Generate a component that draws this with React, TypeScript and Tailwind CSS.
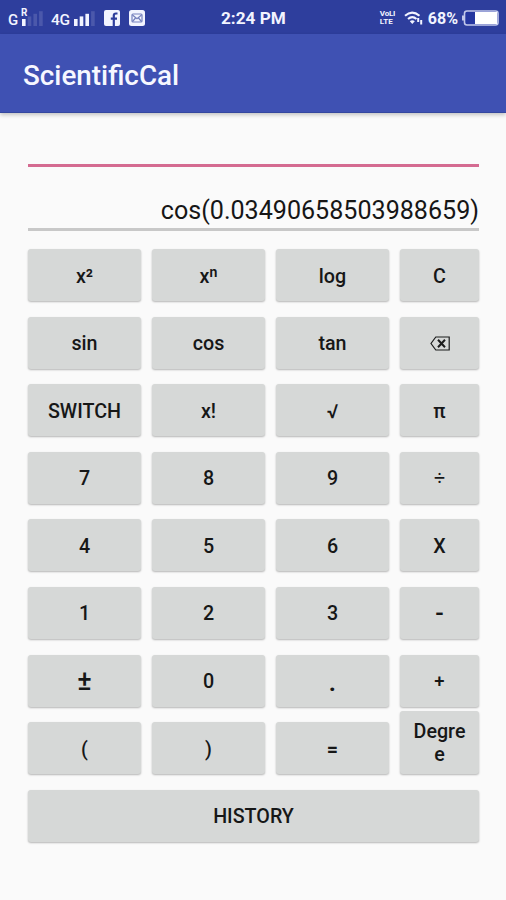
import React from 'react';

interface CalcKey {
  label: React.ReactNode;
  id: string;
  className?: string;
}

const BackspaceIcon = () => (
  <svg width="20" height="15" viewBox="0 0 20 15" fill="none" stroke="#1b1c1c">
    <path d="M5.8 1H19.2V14H5.8L1 7.5Z" strokeWidth="1.2" />
    <path d="M8 3.8L15 11.2M15 3.8L8 11.2" strokeWidth="2" />
  </svg>
);

const keys: CalcKey[] = [
  { id: 'square', label: 'x²' },
  { id: 'power', label: 'xⁿ' },
  { id: 'log', label: 'log' },
  { id: 'clear', label: 'C' },
  { id: 'sin', label: 'sin' },
  { id: 'cos', label: 'cos' },
  { id: 'tan', label: 'tan' },
  { id: 'backspace', label: <BackspaceIcon /> },
  { id: 'switch', label: 'SWITCH' },
  { id: 'factorial', label: 'x!' },
  { id: 'sqrt', label: '√' },
  { id: 'pi', label: 'π' },
  { id: '7', label: '7' },
  { id: '8', label: '8' },
  { id: '9', label: '9' },
  { id: 'divide', label: '÷', className: 'font-normal' },
  { id: '4', label: '4' },
  { id: '5', label: '5' },
  { id: '6', label: '6' },
  { id: 'multiply', label: 'X' },
  { id: '1', label: '1' },
  { id: '2', label: '2' },
  { id: '3', label: '3' },
  { id: 'minus', label: '-', className: 'text-[25px]' },
  { id: 'sign', label: '±', className: 'text-[27px]' },
  { id: '0', label: '0' },
  { id: 'dot', label: '.', className: 'text-[28px]' },
  { id: 'plus', label: '+', className: 'text-[18.5px]' },
  { id: 'open', label: '(' },
  { id: 'close', label: ')' },
  { id: 'equals', label: '=', className: 'font-bold' },
  { id: 'degree', label: 'Degree', className: '-mt-[11px] px-3 pb-[2px] break-all' },
  { id: 'history', label: 'HISTORY', className: 'col-span-4' },
];

const SignalBars = ({ level }: { level: number }) => (
  <svg width="21" height="16" viewBox="0 0 21 16" fill="#f2f4ff">
    {[0, 1, 2, 3].map((i) => (
      <rect
        key={i}
        x={i * 5.7}
        y={9 - i * 2.6}
        width="3.6"
        height={7 + i * 2.6}
        opacity={i < level ? 1 : 0.15}
      />
    ))}
  </svg>
);

const StatusBar = () => (
  <header className="flex h-[34px] items-center bg-[#2e3e9d] pt-0.5 text-[#f2f4ff]">
    <div className="flex w-[221px] items-center pl-2">
      <span className="w-[10px] pt-[3px] text-[15px] leading-[16px] font-medium">G</span>
      <div className="relative ml-1">
        <SignalBars level={1} />
        <span className="absolute -top-[2px] -left-px h-[10px] bg-[#2e3e9d] text-[10px] leading-[10px] font-bold">R</span>
      </div>
      <span className="ml-[8px] w-[19px] pt-[3px] text-[15.5px] leading-[16px] font-medium tracking-tight">4G</span>
      <div className="ml-[4px] flex">
        <SignalBars level={3} />
      </div>
      <svg className="ml-[9px]" width="16" height="16" viewBox="0 0 16 16">
        <rect width="16" height="16" rx="2" fill="#f2f4ff" />
        <path d="M13.5 3.5H12Q9.8 3.5 9.8 5.6V16M6.8 8.6H13" fill="none" stroke="#2e3e9d" strokeWidth="2.2" />
      </svg>
      <svg className="ml-[9px]" width="16" height="16" viewBox="0 0 16 16" fill="none">
        <rect width="16" height="16" rx="2.5" fill="#f2f4ff" />
        <rect x="3" y="4" width="10" height="8" rx="1" stroke="#7480bd" strokeWidth="1.2" />
        <path d="M3.5 5L8 8.7L12.5 5M3.5 11.5L6.5 8M12.5 11.5L9.5 8" stroke="#7480bd" strokeWidth="1.2" />
      </svg>
    </div>
    <span className="pt-px text-[17.2px] font-bold">2:24 PM</span>
    <div className="ml-auto flex items-center pr-[7px]">
      <div className="flex w-[17px] flex-col text-[8px] leading-[8px] font-bold">
        <span className="tracking-tight">VoLI</span>
        <span>LTE</span>
      </div>
      <svg className="ml-[7px]" width="19" height="14" viewBox="0 0 19 14" fill="none" stroke="#f2f4ff">
        <path d="M1 4.8Q8 -1.6 15.5 4.8" strokeWidth="2" />
        <path d="M4 8Q8.3 4.2 12.5 8" strokeWidth="2" />
        <path d="M5.8 10.2Q8.3 8.3 10.8 10.2L8.3 13Z" fill="#f2f4ff" stroke="none" />
        <path d="M14.2 7V11M17.2 9V13.5" strokeWidth="2" />
      </svg>
      <span className="ml-[5px] pt-px text-[16px] font-bold">68%</span>
      <svg className="ml-[3px]" width="38" height="16" viewBox="0 0 38 16">
        <path d="M1 5.5H3V10.5H1Z" fill="#c2c8ea" />
        <rect x="3.5" y="1" width="33.5" height="14" rx="2.5" fill="#2536a0" stroke="#c2c8ea" strokeWidth="1.6" />
        <rect x="14" y="2" width="22" height="12" fill="#ffffff" />
      </svg>
    </div>
  </header>
);

const KeyButton = ({ label, className = '' }: { label: React.ReactNode; className?: string }) => (
  <button
    className={`flex items-center justify-center rounded-[3px] bg-[#d6d8d7] pt-[2px] text-center leading-[23px] text-[#161717] shadow-[0_1px_2px_rgba(0,0,0,0.28)] ${className}`}
  >
    {label}
  </button>
);

export default function App() {
  return (
    <div className="h-[900px] w-[506px] overflow-hidden bg-[#fafafa] font-[Roboto,'Noto_Sans',sans-serif]">
      <StatusBar />
      <div className="flex h-[79px] items-center border-b border-[#34479f] bg-[#3f51b3] px-[23px] pt-[5px] shadow-[0_2px_4px_rgba(0,0,0,0.22)]">
        <h1 className="text-[27.8px] font-medium text-[#f6f7ff]">ScientificCal</h1>
      </div>
      <main className="px-7 pr-[27px]">
        <div className="h-[54px] border-b-[3px] border-[#d46b91]" />
        <div className="flex h-[64px] items-end justify-end border-b-[3px] border-[#c8c8c8] text-[25.1px] text-[#161616]">
          <span className="leading-[35px]">cos(0.03490658503988659)</span>
        </div>
        <div className="mt-[18px] grid auto-rows-[52px] grid-cols-[113px_113px_113px_79px] gap-x-[11px] gap-y-[15.6px] text-[19.7px] font-medium">
          {keys.map((key) => (
            <KeyButton key={key.id} label={key.label} className={key.className} />
          ))}
        </div>
      </main>
    </div>
  );
}
